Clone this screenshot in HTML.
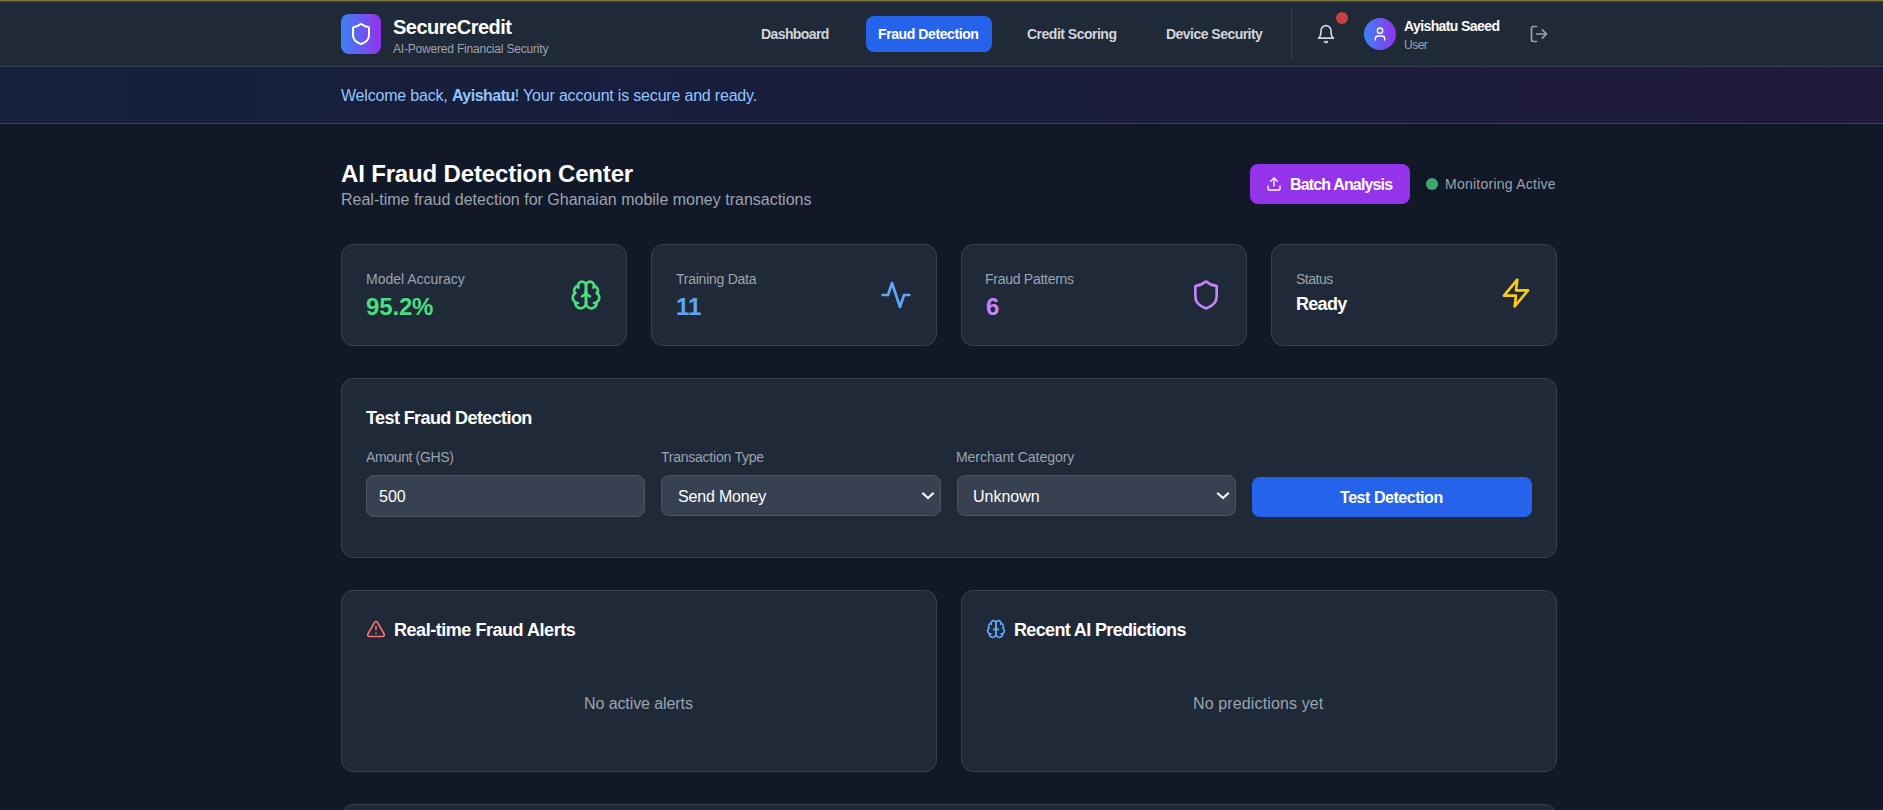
<!DOCTYPE html>
<html>
<head>
<meta charset="utf-8">
<style>
*{box-sizing:border-box;margin:0;padding:0}
html,body{width:1883px;height:810px;overflow:hidden;background:#111827;font-family:"Liberation Sans",sans-serif;color:#fff}
.a{position:absolute}
.t{position:absolute;white-space:nowrap;line-height:1}
svg{display:block}
.card{position:absolute;background:#1f2937;border:1px solid #374151;border-radius:12px}
.inp{position:absolute;background:#374151;border:1px solid #4b5563;border-radius:8px}
</style>
</head>
<body>
<!-- top line -->
<div class="a" style="left:0;top:0;width:1883px;height:1px;background:#7c773f"></div>
<div class="a" style="left:0;top:1px;width:1883px;height:1px;background:#4d4505"></div>
<!-- header -->
<div class="a" style="left:0;top:2px;width:1883px;height:65px;background:#1f2937;border-bottom:1px solid #374151"></div>
<!-- logo -->
<div class="a" style="left:341px;top:14px;width:40px;height:40px;border-radius:8px;background:linear-gradient(90deg,#3b82f6,#9333ea)"></div>
<svg class="a" style="left:349px;top:22px" width="24" height="24" viewBox="0 0 24 24" fill="none" stroke="#fff" stroke-width="2" stroke-linecap="round" stroke-linejoin="round"><path d="M20 13c0 5-3.5 7.5-7.66 8.95a1 1 0 0 1-.67-.01C7.5 20.5 4 18 4 13V6a1 1 0 0 1 1-1c2 0 4.5-1.2 6.24-2.72a1.17 1.17 0 0 1 1.52 0C14.51 3.81 17 5 19 5a1 1 0 0 1 1 1z"/></svg>
<div class="t" id="logo1" style="left:393px;top:17px;font-size:20px;font-weight:700;letter-spacing:-0.5px">SecureCredit</div>
<div class="t" id="logo2" style="left:393px;top:43px;font-size:12px;color:#9ca3af;letter-spacing:-0.19px">AI-Powered Financial Security</div>
<!-- nav -->
<div class="t" style="left:761px;top:27px;font-size:14px;font-weight:700;color:#d1d5db;letter-spacing:-0.6px">Dashboard</div>
<div class="a" style="left:866px;top:16px;width:126px;height:36px;border-radius:8px;background:#2563eb"></div>
<div class="t" style="left:878px;top:27px;font-size:14px;font-weight:700;color:#fff;letter-spacing:-0.41px">Fraud Detection</div>
<div class="t" style="left:1027px;top:27px;font-size:14px;font-weight:700;color:#d1d5db;letter-spacing:-0.5px">Credit Scoring</div>
<div class="t" style="left:1166px;top:27px;font-size:14px;font-weight:700;color:#d1d5db;letter-spacing:-0.53px">Device Security</div>
<div class="a" style="left:1291px;top:8px;width:1px;height:52px;background:#374151"></div>
<!-- bell -->
<svg class="a" style="left:1316px;top:24px" width="20" height="20" viewBox="0 0 24 24" fill="none" stroke="#d1d5db" stroke-width="2" stroke-linecap="round" stroke-linejoin="round"><path d="M6 8a6 6 0 0 1 12 0c0 7 3 9 3 9H3s3-2 3-9"/><path d="M10.3 21a1.94 1.94 0 0 0 3.4 0"/></svg>
<div class="a" style="left:1336px;top:12px;width:12px;height:12px;border-radius:50%;background:#c54243"></div>
<!-- avatar -->
<div class="a" style="left:1364px;top:18px;width:32px;height:32px;border-radius:50%;background:linear-gradient(90deg,#3b82f6,#9333ea)"></div>
<svg class="a" style="left:1372px;top:26px" width="16" height="16" viewBox="0 0 24 24" fill="none" stroke="#fff" stroke-width="2" stroke-linecap="round" stroke-linejoin="round"><path d="M19 21v-2a4 4 0 0 0-4-4H9a4 4 0 0 0-4 4v2"/><circle cx="12" cy="7" r="4"/></svg>
<div class="t" style="left:1404px;top:19px;font-size:14px;font-weight:700;letter-spacing:-0.6px">Ayishatu Saeed</div>
<div class="t" style="left:1404px;top:39px;font-size:12px;color:#9ca3af;letter-spacing:-0.5px">User</div>
<svg class="a" style="left:1529px;top:24px" width="20" height="20" viewBox="0 0 24 24" fill="none" stroke="#9ca3af" stroke-width="2" stroke-linecap="round" stroke-linejoin="round"><path d="M9 21H5a2 2 0 0 1-2-2V5a2 2 0 0 1 2-2h4"/><polyline points="16 17 21 12 16 7"/><line x1="21" y1="12" x2="9" y2="12"/></svg>

<!-- banner -->
<div class="a" style="left:0;top:67px;width:1883px;height:57px;background:linear-gradient(90deg,#14203d,#1f193a);border-bottom:1px solid #374151"></div>
<div class="t" style="left:341px;top:88px;font-size:16px;color:#93c5fd;letter-spacing:-0.19px">Welcome back, <b style="letter-spacing:-0.5px">Ayishatu</b>! Your account is secure and ready.</div>

<!-- page header -->
<div class="t" style="left:341px;top:162px;font-size:24px;font-weight:700;letter-spacing:-0.16px">AI Fraud Detection Center</div>
<div class="t" style="left:341px;top:192px;font-size:16px;color:#9ca3af">Real-time fraud detection for Ghanaian mobile money transactions</div>
<div class="a" style="left:1250px;top:164px;width:160px;height:40px;border-radius:8px;background:#9333ea"></div>
<svg class="a" style="left:1266px;top:176px" width="16" height="16" viewBox="0 0 24 24" fill="none" stroke="#fff" stroke-width="2" stroke-linecap="round" stroke-linejoin="round"><path d="M21 15v4a2 2 0 0 1-2 2H5a2 2 0 0 1-2-2v-4"/><polyline points="17 8 12 3 7 8"/><line x1="12" y1="3" x2="12" y2="15"/></svg>
<div class="t" style="left:1290px;top:177px;font-size:16px;font-weight:700;letter-spacing:-0.85px">Batch Analysis</div>
<div class="a" style="left:1426px;top:178px;width:12px;height:12px;border-radius:50%;background:#3ea86a"></div>
<div class="t" style="left:1445px;top:177px;font-size:14px;color:#9ca3af;letter-spacing:0.25px">Monitoring Active</div>

<!-- stat cards -->
<div class="card" style="left:341px;top:244px;width:286px;height:102px"></div>
<div class="card" style="left:651px;top:244px;width:286px;height:102px"></div>
<div class="card" style="left:961px;top:244px;width:286px;height:102px"></div>
<div class="card" style="left:1271px;top:244px;width:286px;height:102px"></div>
<div class="t" style="left:366px;top:272px;font-size:14px;color:#9ca3af">Model Accuracy</div>
<div class="t" style="left:366px;top:295px;font-size:24px;font-weight:700;color:#4ade80;letter-spacing:-0.16px">95.2%</div>
<svg class="a" style="left:570px;top:279px" width="32" height="32" viewBox="0 0 24 24" fill="none" stroke="#4ade80" stroke-width="2" stroke-linecap="round" stroke-linejoin="round"><path d="M12 5a3 3 0 1 0-5.997.125 4 4 0 0 0-2.526 5.77 4 4 0 0 0 .556 6.588A4 4 0 1 0 12 18Z"/><path d="M12 5a3 3 0 1 1 5.997.125 4 4 0 0 1 2.526 5.77 4 4 0 0 1-.556 6.588A4 4 0 1 1 12 18Z"/><path d="M15 13a4.5 4.5 0 0 1-3-4 4.5 4.5 0 0 1-3 4"/><path d="M17.599 6.5a3 3 0 0 0 .399-1.375"/><path d="M6.003 5.125A3 3 0 0 0 6.401 6.5"/><path d="M3.477 10.896a4 4 0 0 1 .585-.396"/><path d="M19.938 10.5a4 4 0 0 1 .585.396"/><path d="M6 18a4 4 0 0 1-1.967-.516"/><path d="M19.967 17.484A4 4 0 0 1 18 18"/></svg>

<div class="t" style="left:676px;top:272px;font-size:14px;color:#9ca3af;letter-spacing:-0.25px">Training Data</div>
<div class="t" style="left:676px;top:295px;font-size:24px;font-weight:700;color:#60a5fa">11</div>
<svg class="a" style="left:880px;top:279px" width="32" height="32" viewBox="0 0 24 24" fill="none" stroke="#60a5fa" stroke-width="2" stroke-linecap="round" stroke-linejoin="round"><path d="M22 12h-4l-3 9L9 3l-3 9H2"/></svg>

<div class="t" style="left:985px;top:272px;font-size:14px;color:#9ca3af;letter-spacing:-0.27px">Fraud Patterns</div>
<div class="t" style="left:986px;top:295px;font-size:24px;font-weight:700;color:#c084fc">6</div>
<svg class="a" style="left:1190px;top:279px" width="32" height="32" viewBox="0 0 24 24" fill="none" stroke="#c084fc" stroke-width="2" stroke-linecap="round" stroke-linejoin="round"><path d="M20 13c0 5-3.5 7.5-7.66 8.95a1 1 0 0 1-.67-.01C7.5 20.5 4 18 4 13V6a1 1 0 0 1 1-1c2 0 4.5-1.2 6.24-2.72a1.17 1.17 0 0 1 1.52 0C14.51 3.81 17 5 19 5a1 1 0 0 1 1 1z"/></svg>

<div class="t" style="left:1296px;top:272px;font-size:14px;color:#9ca3af;letter-spacing:-0.5px">Status</div>
<div class="t" style="left:1296px;top:295px;font-size:18px;font-weight:700;color:#fff;letter-spacing:-0.7px">Ready</div>
<svg class="a" style="left:1500px;top:277px" width="32" height="32" viewBox="0 0 24 24" fill="none" stroke="#facc15" stroke-width="2" stroke-linecap="round" stroke-linejoin="round"><polygon points="13 2 3 14 12 14 11 22 21 10 12 10 13 2"/></svg>

<!-- test card -->
<div class="card" style="left:341px;top:378px;width:1216px;height:180px"></div>
<div class="t" style="left:366px;top:409px;font-size:18px;font-weight:700;letter-spacing:-0.6px">Test Fraud Detection</div>
<div class="t" style="left:366px;top:450px;font-size:14px;color:#9ca3af;letter-spacing:-0.36px">Amount (GHS)</div>
<div class="t" style="left:661px;top:450px;font-size:14px;color:#9ca3af;letter-spacing:-0.24px">Transaction Type</div>
<div class="t" style="left:956px;top:450px;font-size:14px;color:#9ca3af;letter-spacing:-0.05px">Merchant Category</div>
<div class="inp" style="left:366px;top:475px;width:279px;height:42px"></div>
<div class="t" style="left:379px;top:489px;font-size:16px;color:#fff">500</div>
<div class="inp" style="left:661px;top:475px;width:280px;height:41px"></div>
<div class="t" style="left:678px;top:489px;font-size:16px;color:#fff;letter-spacing:-0.18px">Send Money</div>
<svg class="a" style="left:918px;top:487px" width="20" height="16" fill="none" stroke="#fff" stroke-width="2"><path d="M4.3 5.7 L10 11.1 L15.7 5.7"/></svg>
<div class="inp" style="left:957px;top:475px;width:279px;height:41px"></div>
<div class="t" style="left:973px;top:489px;font-size:16px;color:#fff">Unknown</div>
<svg class="a" style="left:1213px;top:487px" width="20" height="16" fill="none" stroke="#fff" stroke-width="2"><path d="M4.2 5.7 L10 11.1 L15.8 5.7"/></svg>
<div class="a" style="left:1252px;top:477px;width:280px;height:40px;border-radius:8px;background:#2563eb"></div>
<div class="t" style="left:1340px;top:490px;font-size:16px;font-weight:700;color:#fff;letter-spacing:-0.45px">Test Detection</div>

<!-- alert cards -->
<div class="card" style="left:341px;top:590px;width:596px;height:182px"></div>
<svg class="a" style="left:366px;top:619px" width="20" height="20" viewBox="0 0 24 24" fill="none" stroke="#f87171" stroke-width="2" stroke-linecap="round" stroke-linejoin="round"><path d="m21.73 18-8-14a2 2 0 0 0-3.48 0l-8 14A2 2 0 0 0 4 21h16a2 2 0 0 0 1.73-3"/><path d="M12 9v4"/><path d="M12 17h.01"/></svg>
<div class="t" style="left:394px;top:621px;font-size:18px;font-weight:700;letter-spacing:-0.46px">Real-time Fraud Alerts</div>
<div class="t" style="left:584px;top:696px;font-size:16px;color:#9ca3af;letter-spacing:-0.09px">No active alerts</div>

<div class="card" style="left:961px;top:590px;width:596px;height:182px"></div>
<svg class="a" style="left:986px;top:619px" width="20" height="20" viewBox="0 0 24 24" fill="none" stroke="#60a5fa" stroke-width="2" stroke-linecap="round" stroke-linejoin="round"><path d="M12 5a3 3 0 1 0-5.997.125 4 4 0 0 0-2.526 5.77 4 4 0 0 0 .556 6.588A4 4 0 1 0 12 18Z"/><path d="M12 5a3 3 0 1 1 5.997.125 4 4 0 0 1 2.526 5.77 4 4 0 0 1-.556 6.588A4 4 0 1 1 12 18Z"/><path d="M15 13a4.5 4.5 0 0 1-3-4 4.5 4.5 0 0 1-3 4"/><path d="M17.599 6.5a3 3 0 0 0 .399-1.375"/><path d="M6.003 5.125A3 3 0 0 0 6.401 6.5"/><path d="M3.477 10.896a4 4 0 0 1 .585-.396"/><path d="M19.938 10.5a4 4 0 0 1 .585.396"/><path d="M6 18a4 4 0 0 1-1.967-.516"/><path d="M19.967 17.484A4 4 0 0 1 18 18"/></svg>
<div class="t" style="left:1014px;top:621px;font-size:18px;font-weight:700;letter-spacing:-0.645px">Recent AI Predictions</div>
<div class="t" style="left:1193px;top:696px;font-size:16px;color:#9ca3af;letter-spacing:0.13px">No predictions yet</div>

<!-- bottom card -->
<div class="card" style="left:341px;top:804px;width:1216px;height:200px"></div>
</body>
</html>
